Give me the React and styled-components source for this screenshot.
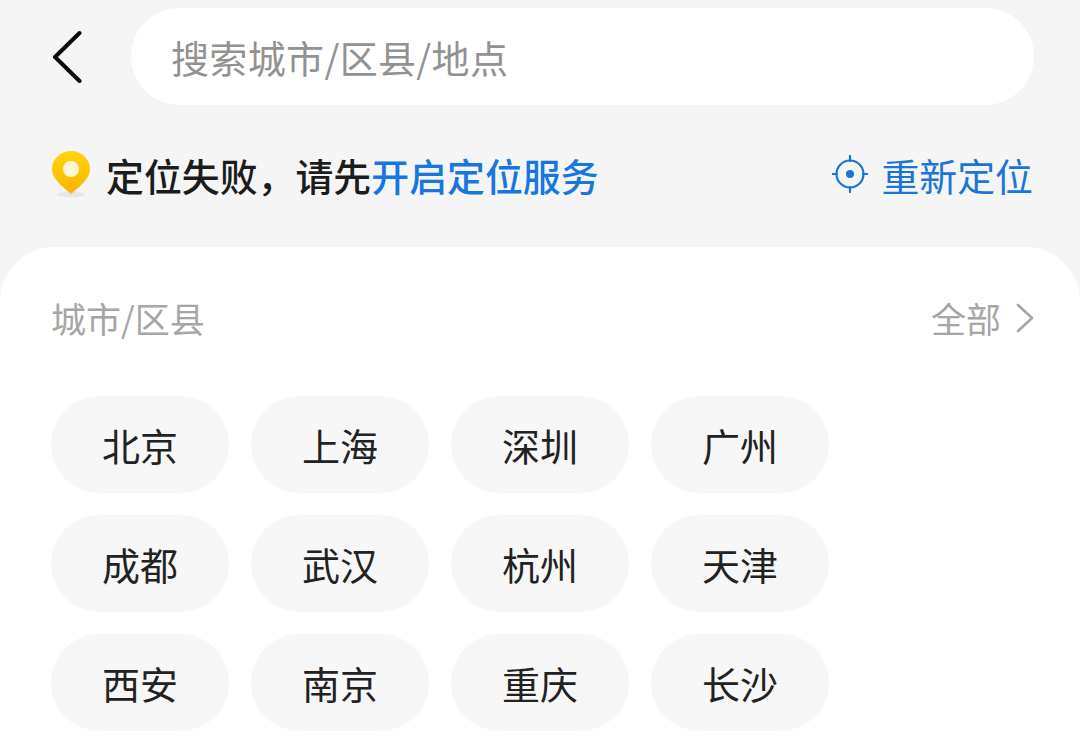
import React from "react";
import styled, { createGlobalStyle } from "styled-components";

const Global = createGlobalStyle`
  html, body { margin: 0; padding: 0; height: 100%; background: #f5f5f5; overflow: hidden; }
  body { font-family: "Noto Sans CJK SC", "Liberation Sans", sans-serif; }
`;
const Page = styled.div`
  width: 1080px; height: 745px; overflow: hidden; background: #f5f5f5;
  display: flex; flex-direction: column;
`;
const Header = styled.div`
  display: flex; align-items: center; padding: 8px 46px 0 48px; height: 97px; flex: none;
`;
const BackButton = styled.div`
  width: 83px; flex: none; display: flex; align-items: center; height: 97px;
  svg { margin-top: -2px; }
`;
const SearchBox = styled.div`
  flex: 1; height: 97px; box-sizing: border-box; border-radius: 48.5px; background: #fff;
  display: flex; align-items: center; padding: 0 0 1px 40px;
  font-size: 38px; letter-spacing: 0.35px; color: #929292;
`;
const LocationRow = styled.div`
  display: flex; align-items: center; justify-content: space-between;
  padding: 0 47px 0 51px; height: 48px; margin-top: 45px; flex: none;
`;
const LocationLeft = styled.div`
  display: flex; align-items: center; gap: 15px;
  font-size: 37.9px; font-weight: 500; color: #1c1c1c;
`;
const Link = styled.span` color: #1677e0; `;
const Relocate = styled.div`
  display: flex; align-items: center; gap: 13px;
  font-size: 37.9px; color: #1976d8;
`;
const Sheet = styled.div`
  flex: 1; margin-top: 49px; background: #fff; border-radius: 54px 54px 0 0;
  padding: 43px 45px 0 51px;
`;
const SectionHead = styled.div`
  display: flex; align-items: center; justify-content: space-between; height: 54px;
  font-size: 35px; color: #a6a6a6;
`;
const AllLink = styled.div`
  display: flex; align-items: center; gap: 14px;
  svg { margin-top: 2px; }
`;
const Grid = styled.div`
  display: grid; grid-template-columns: repeat(4, 178px); column-gap: 22px; row-gap: 22px;
  margin-top: 52px;
`;
const Chip = styled.div`
  height: 97px; box-sizing: border-box; padding-bottom: 1px; border-radius: 48.5px; background: #f7f7f7; color: #222;
  display: flex; align-items: center; justify-content: center; font-size: 38px;
`;

const cities = ["北京","上海","深圳","广州","成都","武汉","杭州","天津","西安","南京","重庆","长沙"];

export default function App() {
  return (
    <Page>
      <Global />
      <Header>
        <BackButton>
          <svg width="36" height="54" viewBox="0 0 36 54" fill="none">
            <path d="M31.500 4 L7 28 L31.500 52" stroke="#0a0a0a" strokeWidth="4" strokeLinecap="round" strokeLinejoin="round" />
          </svg>
        </BackButton>
        <SearchBox>搜索城市/区县/地点</SearchBox>
      </Header>
      <LocationRow>
        <LocationLeft>
          <svg width="40" height="48" viewBox="0 0 40 48">
            <defs>
              <linearGradient id="pin" x1="0" y1="0" x2="0" y2="1">
                <stop offset="0" stopColor="#ffd60a" />
                <stop offset="1" stopColor="#ffb300" />
              </linearGradient>
            </defs>
            <ellipse cx="20" cy="44.500" rx="14" ry="3" fill="#e6e6e6" />
            <path d="M20 1 C9.500 1 1 9 1 19 C1 29 12 37 20 44 C28 37 39 29 39 19 C39 9 30.500 1 20 1 Z" fill="url(#pin)" />
            <circle cx="20" cy="19" r="8" fill="#fff6d8" />
          </svg>
          <span>定位失败，请先<Link>开启定位服务</Link></span>
        </LocationLeft>
        <Relocate>
          <svg width="36" height="38" viewBox="0 0 36 38" fill="none" stroke="#1976d8" strokeWidth="2.200">
            <circle cx="18" cy="19" r="13.500" />
            <circle cx="18" cy="19" r="4" fill="#1976d8" stroke="none" />
            <path d="M18 1 V6 M18 32 V37 M0 19 H5 M31 19 H36" strokeLinecap="round" />
          </svg>
          <span>重新定位</span>
        </Relocate>
      </LocationRow>
      <Sheet>
        <SectionHead>
          <span>城市/区县</span>
          <AllLink>
            <span>全部</span>
            <svg width="20" height="32" viewBox="0 0 20 32" fill="none">
              <path d="M3 3 L17 16 L3 29" stroke="#a6a6a6" strokeWidth="2.600" strokeLinecap="round" strokeLinejoin="round" />
            </svg>
          </AllLink>
        </SectionHead>
        <Grid>
          {cities.map((c) => <Chip key={c}>{c}</Chip>)}
        </Grid>
      </Sheet>
    </Page>
  );
}
